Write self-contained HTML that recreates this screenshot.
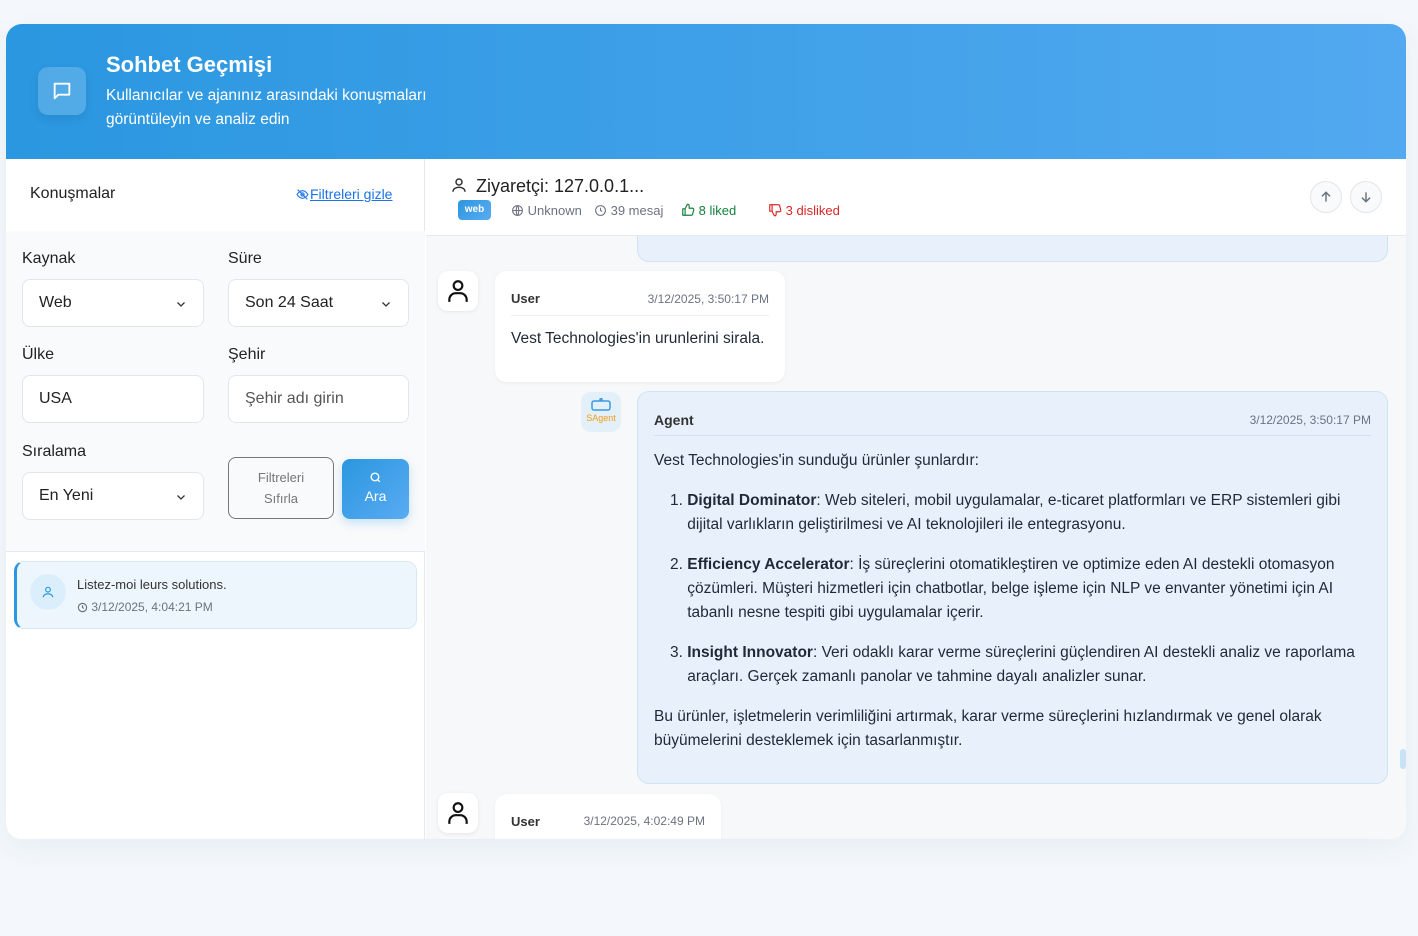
<!DOCTYPE html>
<html><head><meta charset="utf-8"><style>
*{box-sizing:border-box;margin:0;padding:0}
body{width:1418px;height:936px;background:#f4f8fc;font-family:"Liberation Sans",sans-serif;position:relative;overflow:hidden;color:#1f2937}
.abs{position:absolute}
.card{left:6px;top:24px;width:1400px;height:815px;background:#fff;border-radius:16px;overflow:hidden;box-shadow:0 10px 30px rgba(30,60,100,.06)}
.hdr{left:0;top:0;width:1400px;height:135px;background:linear-gradient(90deg,#2a97e0,#52a9f0)}
.lbl{font-size:16px;color:#222}
.inp{background:#fff;border:1px solid #e2e5ea;border-radius:8px;height:48px;font-size:16px;padding:0 16px;line-height:46px;color:#222}
.chev{position:absolute;right:16px;top:18px}
.sub{font-size:13px;color:#6b7280}
.bubble{background:#fff;border-radius:12px;box-shadow:0 1px 4px rgba(0,0,0,.05)}
.av{width:40px;height:40px;background:#fff;border-radius:10px;box-shadow:0 1px 4px rgba(0,0,0,.08);display:flex;align-items:center;justify-content:center}
.msg{font-size:15.5px;line-height:24px;color:#1f2937;white-space:nowrap}
.ic{vertical-align:-2px}
</style></head><body>
<div class="abs card">
 <div class="abs hdr">
  <div class="abs" style="left:32px;top:43px;width:48px;height:48px;border-radius:10px;background:rgba(255,255,255,.18);box-shadow:0 4px 10px rgba(0,0,0,.08);display:flex;align-items:center;justify-content:center">
   <svg width="22" height="22" viewBox="0 0 24 24" fill="none" stroke="#fff" stroke-width="2" stroke-linejoin="round"><path d="M4 4h16v12H8l-4 4z"/></svg>
  </div>
  <div class="abs" style="left:100px;top:28px;color:#fff;font-size:22px;font-weight:bold">Sohbet Geçmişi</div>
  <div class="abs" style="left:100px;top:60px;color:#fff;font-size:15.5px;line-height:24px">Kullanıcılar ve ajanınız arasındaki konuşmaları<br>görüntüleyin ve analiz edin</div>
 </div>
 <div class="abs" style="left:0;top:135px;width:419px;height:680px;background:#fff;border-right:1px solid #e6e8ec">
  <div class="abs" style="left:24px;top:26px;font-size:16px;color:#222">Konuşmalar</div>
  <div class="abs" style="left:289px;top:27px;font-size:14px;color:#1a73e8;text-decoration:underline">
   <svg width="15" height="13" viewBox="0 0 24 24" fill="none" stroke="#1a73e8" stroke-width="2" style="vertical-align:-2px"><path d="M2 12s4-7 10-7 10 7 10 7-4 7-10 7S2 12 2 12z"/><circle cx="12" cy="12" r="3"/><path d="M3 3l18 18"/></svg>Filtreleri gizle</div>
  <div class="abs" style="left:0;top:72px;width:419px;height:321px;background:#f9fafb;border-bottom:1px solid #e6e8ec">
   <div class="abs lbl" style="left:16px;top:19px">Kaynak</div>
   <div class="abs lbl" style="left:222px;top:19px">Süre</div>
   <div class="abs inp" style="left:16px;top:48px;width:182px">Web<svg class="chev" width="12" height="12" viewBox="0 0 24 24" fill="none" stroke="#333" stroke-width="2.5"><path d="M5 9l7 7 7-7"/></svg></div>
   <div class="abs inp" style="left:222px;top:48px;width:181px">Son 24 Saat<svg class="chev" width="12" height="12" viewBox="0 0 24 24" fill="none" stroke="#333" stroke-width="2.5"><path d="M5 9l7 7 7-7"/></svg></div>
   <div class="abs lbl" style="left:16px;top:115px">Ülke</div>
   <div class="abs lbl" style="left:222px;top:115px">Şehir</div>
   <div class="abs inp" style="left:16px;top:144px;width:182px">USA</div>
   <div class="abs inp" style="left:222px;top:144px;width:181px;color:#555">Şehir adı girin</div>
   <div class="abs lbl" style="left:16px;top:212px">Sıralama</div>
   <div class="abs inp" style="left:16px;top:241px;width:182px">En Yeni<svg class="chev" width="12" height="12" viewBox="0 0 24 24" fill="none" stroke="#333" stroke-width="2.5"><path d="M5 9l7 7 7-7"/></svg></div>
   <div class="abs" style="left:222px;top:226px;width:106px;height:62px;border:1px solid #777;border-radius:8px;text-align:center;font-size:13px;line-height:21px;color:#777;padding-top:9px">Filtreleri<br>Sıfırla</div>
   <div class="abs" style="left:336px;top:228px;width:67px;height:60px;border-radius:8px;background:linear-gradient(135deg,#2a97e0,#5aabf2);box-shadow:0 4px 10px rgba(42,151,224,.25);text-align:center;color:#fff;font-size:14px;padding-top:12px">
    <svg width="13" height="13" viewBox="0 0 24 24" fill="none" stroke="#fff" stroke-width="2.5"><circle cx="11" cy="11" r="7"/><path d="M16 16l4 4"/></svg><div style="margin-top:1px">Ara</div></div>
  </div>
  <div class="abs" style="left:8px;top:402px;width:403px;height:68px;background:#eef6fd;border:1px solid #d6e8f7;border-left:3px solid #2a97e0;border-radius:10px">
   <div class="abs" style="left:13px;top:12px;width:36px;height:36px;border-radius:50%;background:#dbeefb;display:flex;align-items:center;justify-content:center">
    <svg width="14" height="14" viewBox="0 0 24 24" fill="none" stroke="#2a97e0" stroke-width="2"><circle cx="12" cy="8" r="4"/><path d="M4 21c0-4 4-6 8-6s8 2 8 6"/></svg></div>
   <div class="abs" style="left:60px;top:15px;font-size:13px;color:#333">Listez-moi leurs solutions.</div>
   <div class="abs sub" style="left:60px;top:38px;font-size:12px"><svg class="ic" width="11" height="11" viewBox="0 0 24 24" fill="none" stroke="#6b7280" stroke-width="2.5"><circle cx="12" cy="12" r="9"/><path d="M12 7v5l3 2"/></svg> 3/12/2025, 4:04:21 PM</div>
  </div>
 </div>
 <div class="abs" style="left:420px;top:135px;width:980px;height:680px;background:#f7f8fa">
  <div class="abs" style="left:211px;top:60px;width:751px;height:43px;background:#e8f1fb;border:1px solid #cfe3f6;border-radius:12px"></div>
  <div class="abs" style="left:0;top:0;width:980px;height:77px;background:#fff;border-bottom:1px solid #e6e8ec">
   <svg class="abs" style="left:24px;top:17px" width="18" height="18" viewBox="0 0 24 24" fill="none" stroke="#333" stroke-width="2"><circle cx="12" cy="8" r="4"/><path d="M4 21c0-4 4-6 8-6s8 2 8 6"/></svg>
   <div class="abs" style="left:50px;top:17px;font-size:18px;color:#222">Ziyaretçi: 127.0.0.1...</div>
   <div class="abs" style="left:32px;top:41px;width:33px;height:20px;border-radius:4px;background:linear-gradient(135deg,#2a97e0,#5aabf2);color:#fff;font-size:10px;font-weight:bold;text-align:center;line-height:20px">web</div>
   <div class="abs sub" style="left:85px;top:44px"><svg class="ic" width="13" height="13" viewBox="0 0 24 24" fill="none" stroke="#6b7280" stroke-width="2"><circle cx="12" cy="12" r="9"/><path d="M3 12h18M12 3c3 3 3 15 0 18M12 3c-3 3-3 15 0 18"/></svg> Unknown</div>
   <div class="abs sub" style="left:168px;top:44px"><svg class="ic" width="13" height="13" viewBox="0 0 24 24" fill="none" stroke="#6b7280" stroke-width="2"><circle cx="12" cy="12" r="9"/><path d="M12 7v5l3 2"/></svg> 39 mesaj</div>
   <div class="abs" style="left:255px;top:44px;font-size:13px;color:#15803d"><svg class="ic" width="14" height="14" viewBox="0 0 24 24" fill="none" stroke="#15803d" stroke-width="2" stroke-linejoin="round"><path d="M7 10v11H3V10zM7 10l4-8c2 0 3 1 3 3v4h6c1 0 2 1 2 2l-2 8c0 1-1 2-2 2H7"/></svg> 8 liked</div>
   <div class="abs" style="left:342px;top:44px;font-size:13px;color:#dc2626"><svg class="ic" width="14" height="14" viewBox="0 0 24 24" fill="none" stroke="#dc2626" stroke-width="2" stroke-linejoin="round"><path d="M7 14V3H3v11zM7 14l4 8c2 0 3-1 3-3v-4h6c1 0 2-1 2-2l-2-8c0-1-1-2-2-2H7"/></svg> 3 disliked</div>
   <div class="abs" style="left:884px;top:22px;width:32px;height:32px;border-radius:50%;border:1px solid #e2e5ea;background:#f9fafb;display:flex;align-items:center;justify-content:center"><svg width="14" height="14" viewBox="0 0 24 24" fill="none" stroke="#6b7280" stroke-width="2.5"><path d="M12 20V4M5 11l7-7 7 7"/></svg></div>
   <div class="abs" style="left:924px;top:22px;width:32px;height:32px;border-radius:50%;border:1px solid #e2e5ea;background:#f9fafb;display:flex;align-items:center;justify-content:center"><svg width="14" height="14" viewBox="0 0 24 24" fill="none" stroke="#6b7280" stroke-width="2.5"><path d="M12 4v16M5 13l7 7 7-7"/></svg></div>
  </div>
  <div class="abs av" style="left:12px;top:112px"><svg width="26" height="26" viewBox="0 0 24 24" fill="none" stroke="#111" stroke-width="2"><circle cx="12" cy="7" r="4"/><path d="M4 22v-2a6 6 0 0 1 6-6h4a6 6 0 0 1 6 6v2"/></svg></div>
  <div class="abs bubble" style="left:69px;top:112px;width:290px;height:111px">
   <div class="abs" style="left:16px;top:20px;font-size:13px;font-weight:bold;color:#333">User</div>
   <div class="abs sub" style="right:16px;top:21px;font-size:12px">3/12/2025, 3:50:17 PM</div>
   <div class="abs" style="left:16px;top:44px;width:258px;border-top:1px solid #eee"></div>
   <div class="abs msg" style="left:16px;top:56px">Vest Technologies'in urunlerini sirala.</div>
  </div>
  <div class="abs" style="left:155px;top:233px;width:40px;height:40px;border-radius:10px;background:#e3eff9;text-align:center;font-size:9px;color:#f39c12;padding-top:6px">
   <svg width="24" height="14" viewBox="0 0 24 14" fill="none" stroke="#3a9ae0" stroke-width="1.5"><rect x="3" y="3" width="18" height="9" rx="2"/><circle cx="12" cy="1.5" r="1"/></svg><div style="line-height:9px">SAgent</div></div>
  <div class="abs" style="left:211px;top:232px;width:751px;height:393px;background:#e8f1fb;border:1px solid #cfe3f6;border-radius:12px">
   <div class="abs" style="left:16px;top:20px;font-size:14px;font-weight:bold;color:#333">Agent</div>
   <div class="abs sub" style="right:16px;top:21px;font-size:12px">3/12/2025, 3:50:17 PM</div>
   <div class="abs" style="left:16px;top:43px;width:717px;border-top:1px solid #d3e2f0"></div>
   <div class="abs msg" style="left:16px;top:57px">Vest Technologies'in sunduğu ürünler şunlardır:</div>
   <div class="abs msg" style="left:32px;top:97px">1. <b>Digital Dominator</b>: Web siteleri, mobil uygulamalar, e-ticaret platformları ve ERP sistemleri gibi<br>&nbsp;&nbsp;&nbsp;&nbsp;dijital varlıkların geliştirilmesi ve AI teknolojileri ile entegrasyonu.</div>
   <div class="abs msg" style="left:32px;top:161px">2. <b>Efficiency Accelerator</b>: İş süreçlerini otomatikleştiren ve optimize eden AI destekli otomasyon<br>&nbsp;&nbsp;&nbsp;&nbsp;çözümleri. Müşteri hizmetleri için chatbotlar, belge işleme için NLP ve envanter yönetimi için AI<br>&nbsp;&nbsp;&nbsp;&nbsp;tabanlı nesne tespiti gibi uygulamalar içerir.</div>
   <div class="abs msg" style="left:32px;top:249px">3. <b>Insight Innovator</b>: Veri odaklı karar verme süreçlerini güçlendiren AI destekli analiz ve raporlama<br>&nbsp;&nbsp;&nbsp;&nbsp;araçları. Gerçek zamanlı panolar ve tahmine dayalı analizler sunar.</div>
   <div class="abs msg" style="left:16px;top:313px">Bu ürünler, işletmelerin verimliliğini artırmak, karar verme süreçlerini hızlandırmak ve genel olarak<br>büyümelerini desteklemek için tasarlanmıştır.</div>
  </div>
  <div class="abs" style="left:974px;top:590px;width:6px;height:20px;border-radius:3px;background:#c8e2f7"></div>
  <div class="abs av" style="left:12px;top:634px"><svg width="26" height="26" viewBox="0 0 24 24" fill="none" stroke="#111" stroke-width="2"><circle cx="12" cy="7" r="4"/><path d="M4 22v-2a6 6 0 0 1 6-6h4a6 6 0 0 1 6 6v2"/></svg></div>
  <div class="abs bubble" style="left:69px;top:635px;width:226px;height:60px">
   <div class="abs" style="left:16px;top:20px;font-size:13px;font-weight:bold;color:#333">User</div>
   <div class="abs sub" style="right:16px;top:20px;font-size:12px">3/12/2025, 4:02:49 PM</div>
  </div>
 </div>
</div>
</body></html>
